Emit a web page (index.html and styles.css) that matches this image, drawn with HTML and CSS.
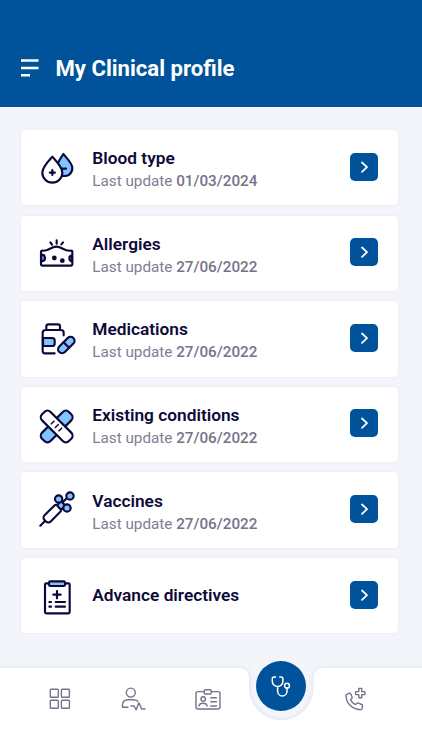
FILE: index.html
```html
<!DOCTYPE html>
<html lang="en">
<head>
<meta charset="utf-8">
<title>My Clinical profile</title>
<link rel="stylesheet" href="styles.css">
</head>
<body>
<div class="app">
  <header class="header">
    <svg class="menu" viewBox="0 0 18 18"><path d="M0 1.5h17.5M0 9h17.5M0 16.2h9"/></svg>
    <h1>My Clinical profile</h1>
  </header>
  <main class="list">
    <article class="card">
      <svg class="icon" viewBox="21 23 120 120">
        <path class="fill" d="M100 41C94 50 87 61 83 70L96 94L95 106C113 110 127 101 127 83C127 69 110 53 100 41Z"/>
        <path class="paper" d="M67 49C56 61 37 80 37 97A30 30 0 0 0 97 97C97 80 78 61 67 49Z"/>
        <path d="M67 89v15M59.500 97h15M98 85h10"/>
      </svg>
      <div class="info"><h2>Blood type</h2><p>Last update <b>01/03/2024</b></p></div>
      <button class="go"><svg viewBox="0 0 28 28"><path d="M12 9.5l5 4.7-5 4.7"/></svg></button>
    </article>
    <article class="card">
      <svg class="icon" viewBox="21 16 120 120">
        <path d="M33 72Q33 69 37 69C55 72 62 57 79 57S104 72 122 69Q127 69 127 73V109Q127 114 122 114H38Q33 114 33 109Z"/>
        <path class="fill" d="M34 81Q45 81 45 91T34 101ZM126 84Q118 84 118 92T126 101Z"/>
        <circle class="spot" cx="73" cy="91" r="4"/><circle class="spot" cx="97" cy="99" r="4"/>
        <path d="M80 38v10M61 44l5 7M99 44l-5 6"/>
      </svg>
      <div class="info"><h2>Allergies</h2><p>Last update <b>27/06/2022</b></p></div>
      <button class="go"><svg viewBox="0 0 28 28"><path d="M12 9.5l5 4.7-5 4.7"/></svg></button>
    </article>
    <article class="card">
      <svg class="icon" viewBox="21 21 120 120">
        <path d="M74 124H45Q38 124 38 117V63Q38 54 47 54H93Q101 54 101 62V70M49 53V43Q49 37 55 37H84Q90 37 90 43V53"/>
        <path class="fill" d="M39 78H66Q74 78 74 85V95Q74 102 66 102H39Z"/>
        <g transform="rotate(-45 109 99)"><rect class="fill" x="79" y="87" width="60" height="24" rx="12"/><path d="M109 87v24"/></g>
      </svg>
      <div class="info"><h2>Medications</h2><p>Last update <b>27/06/2022</b></p></div>
      <button class="go"><svg viewBox="0 0 28 28"><path d="M12 9.5l5 4.7-5 4.7"/></svg></button>
    </article>
    <article class="card">
      <svg class="icon" viewBox="21 25.5 120 120">
        <rect class="fill" x="23" y="75" width="114" height="36" rx="13" transform="rotate(-45 80 93)"/>
        <rect class="paper" x="23" y="75" width="114" height="36" rx="13" transform="rotate(45 80 93)"/>
        <path class="thin" d="M64 85l8-8M76 96l9-9M87 106l8-8"/>
      </svg>
      <div class="info"><h2>Existing conditions</h2><p>Last update <b>27/06/2022</b></p></div>
      <button class="go"><svg viewBox="0 0 28 28"><path d="M12 9.5l5 4.7-5 4.7"/></svg></button>
    </article>
    <article class="card">
      <svg class="icon" viewBox="21 24 120 120">
        <path d="M31 131l16-16M92 67l19-19"/>
        <rect class="paper" x="37" y="82" width="60" height="26" rx="10" transform="rotate(-45 67 95)"/>
        <rect class="fill" x="84" y="61" width="18" height="19" rx="5" transform="rotate(-45 93 70)"/>
        <circle class="fill" cx="86" cy="51" r="11"/><circle class="fill" cx="120" cy="42" r="11"/><circle class="fill" cx="111" cy="78" r="11"/>
      </svg>
      <div class="info"><h2>Vaccines</h2><p>Last update <b>27/06/2022</b></p></div>
      <button class="go"><svg viewBox="0 0 28 28"><path d="M12 9.5l5 4.7-5 4.7"/></svg></button>
    </article>
    <article class="card">
      <svg class="icon" viewBox="21 23 120 120">
        <rect x="45" y="45" width="74" height="90" rx="4"/>
        <rect class="fill" x="57" y="39" width="48" height="14" rx="4"/>
        <path d="M81 68v22M70 79h22M58 101h5M77 101h28M58 115h5M77 115h28"/>
      </svg>
      <div class="info single"><h2>Advance directives</h2></div>
      <button class="go"><svg viewBox="0 0 28 28"><path d="M12 9.5l5 4.7-5 4.7"/></svg></button>
    </article>
  </main>
  <nav class="nav">
    <svg class="nav-bg" viewBox="0 0 422 82"><path d="M-5 0H239Q249 0 249 11V20A32.2 32.2 0 0 0 313.4 20V11Q313.4 0 324 0H427V90H-5Z"/></svg>
    <a class="tab"><svg viewBox="0 0 28 28"><rect x="4.3" y="4.3" width="8" height="8" rx=".8"/><rect x="15.4" y="4.3" width="8" height="8" rx=".8"/><rect x="4.3" y="15.3" width="8" height="8" rx=".8"/><rect x="15.4" y="15.3" width="8" height="8" rx=".8"/></svg></a>
    <a class="tab"><svg viewBox="0 0 28 28"><circle cx="11.8" cy="7.6" r="4.5"/><path d="M9 22.3H3.5V20Q3.5 14.7 9 14.7H14Q17.3 14.7 18.8 16.3M12 21h3l2.2 3.8 2.7-7 2.8 6.2H26"/></svg></a>
    <a class="tab"><svg viewBox="-1 0 28 28"><path d="M10 6.6H4Q2 6.6 2 8.6V22Q2 24 4 24H24Q26 24 26 22V8.6Q26 6.6 24 6.6H17.3"/><rect x="10.2" y="4.7" width="7" height="4.3" rx="1"/><circle cx="9.2" cy="14" r="2.2"/><path d="M5 21Q5.3 18.2 9 18.2T13.2 21M16.8 12.7h5.6M16.8 16.8h5.6M16.8 21h5.6"/></svg></a>
    <a class="tab active"><svg viewBox="0 0 28 28"><path d="M8.6 5H7Q5.3 5 5.3 7V9.2A5.3 5.3 0 0 0 15.9 9.2V7Q15.9 5 14.2 5H12.8M10.6 14.6V19.2A4.7 4.7 0 0 0 20 19.2V16"/><circle cx="20" cy="13.7" r="2.4"/></svg></a>
    <a class="tab"><svg viewBox="-1.5 0 28 28"><path d="M4.3 9.4L6.7 8.2Q7.8 7.8 8.3 9L9.6 12Q10 13 9 13.8L8 14.6Q9.5 18 13 19.6L14.3 18.4Q15 17.7 16 18.1L19.2 19.5Q20.2 20 20 21L19.4 24Q19 24.7 18 24.7C9.5 24.5 3.5 18 3.5 10.5Q3.5 9.8 4.3 9.4Z"/><path d="M16.3 3.4h2.9v3.2h3.2v3h-3.2v3.2h-2.9V9.6h-3.2v-3h3.2Z"/></svg></a>
  </nav>
</div>
</body>
</html>
```
FILE: styles.css
```css
* { box-sizing: border-box; }
body { margin: 0; font-family: Roboto, sans-serif; background: #f4f5fa; }
h1, h2, p { margin: 0; }
svg { fill: none; stroke-linecap: round; stroke-linejoin: round; flex: none; overflow: visible; }
.app { width: 422px; height: 750px; display: flex; flex-direction: column; overflow: hidden; }
.header { height: 107px; flex: none; background: #00539a; display: flex; align-items: center; padding: 29px 20px 0 20.5px; gap: 17px; color: #fff; }
.menu { width: 18px; height: 18px; stroke: #fff; stroke-width: 2.5; stroke-linecap: butt; }
h1 { font-size: 22.1px; line-height: 28px; font-weight: 700; white-space: nowrap; }
.list { flex: 1; display: flex; flex-direction: column; gap: 10.2px; padding: 23px 23.8px 0 20.5px; }
.card { height: 75.4px; flex: none; background: #fff; border-radius: 4px; box-shadow: 0 0 3px #e3e5f0; display: flex; align-items: center; padding: 0 20.2px 2px 16.5px; }
.icon { width: 40px; height: 40px; margin-top: 2px; stroke: #0c073b; stroke-width: 6.4; }
.thin { stroke-width: 4.5; }
.fill { fill: #80c3ff; }
.paper { fill: #fff; }
.spot { fill: #0c073b; }
.info { flex: 1; padding: 7px 0 0 15.3px; white-space: nowrap; }
.single { padding-top: 1px; }
h2 { font-size: 17.3px; line-height: 22px; font-weight: 600; color: #0e0938; }
p { font-size: 15.25px; line-height: 24px; color: #817d93; }
b { font-weight: 500; color: #777289; }
.go { width: 28px; height: 28px; padding: 0; border: 0; border-radius: 5px; background: #00539a; }
.go svg { display: block; width: 28px; height: 28px; stroke: #fff; stroke-width: 1.8; }
.nav { position: relative; height: 82px; flex: none; display: flex; align-items: flex-start; padding: 17px 30px 0 22.6px; }
.nav-bg { position: absolute; left: 0; top: 0; width: 422px; height: 82px; fill: #fff; filter: drop-shadow(0 0 2px #d0dcec); }
.tab { position: relative; width: 74px; height: 28px; display: flex; justify-content: center; }
.tab svg { width: 28px; height: 28px; stroke: #777289; stroke-width: 1.4; }
.tab.active { width: 50px; height: 50px; margin: -24px 12px 0; border-radius: 50%; background: #00539a; align-items: center; }
.tab.active svg { stroke: #fff; stroke-width: 1.5; }
```
